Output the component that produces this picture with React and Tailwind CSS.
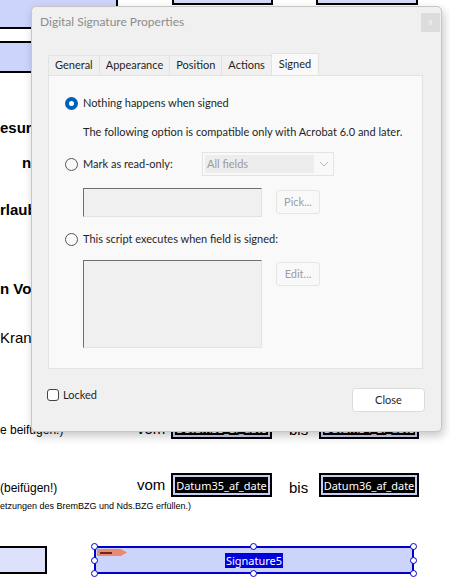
import React from 'react';

const ui = { fontFamily: 'Lato, "Noto Sans", sans-serif' };
const arial = { fontFamily: '"Liberation Sans", Arial, sans-serif' };

function Radio({ checked }) {
  if (checked) {
    return (
      <span className="w-[13px] h-[13px] rounded-full bg-[#005fb8] flex items-center justify-center shrink-0">
        <span className="w-[5px] h-[5px] rounded-full bg-white" />
      </span>
    );
  }
  return <span className="w-[13px] h-[13px] rounded-full border border-[#555] bg-transparent shrink-0" />;
}

function DateField({ label, h }) {
  return (
    <div className={`w-full ${h} border-2 border-black bg-[#c9cdf2] p-[2px]`}>
      <div className="w-full h-full bg-black text-white text-[11px] leading-none flex items-center justify-center" style={{ fontFamily: '"Noto Sans", sans-serif' }}>
        {label}
      </div>
    </div>
  );
}

function Handle({ className }) {
  return <span className={`absolute w-[7px] h-[7px] rounded-full bg-white border-[1.5px] border-[#0000cc] ${className}`} />;
}

function DateRow({ note, from, to, h, mt }) {
  return (
    <div className={`grid grid-cols-[137px_34px_101px_47px_100px] items-center ${mt} text-[15px] text-black`}>
      <span className="self-end text-[12px] leading-[18px]">{note}</span>
      <span className="leading-[18px]">vom</span>
      <DateField label={from} h={h} />
      <span className="self-end pl-[17px] leading-[18px]">bis</span>
      <DateField label={to} h={h} />
    </div>
  );
}

export default function App() {
  const tabs = ['General', 'Appearance', 'Position', 'Actions'];
  return (
    <div className="relative w-[450px] h-[583px] overflow-hidden bg-white" style={arial}>
      {/* PDF page underneath */}
      <div className="flex flex-col">
        <div className="flex items-start">
          <div className="w-[118px] h-[29px] bg-[#ccd4fc] border-r-2 border-b-2 border-black" />
          <div className="ml-[54px] w-[101px] h-[5px] bg-[#d4d8f4] border-x-2 border-b-2 border-black" />
          <div className="ml-[43px] w-[102px] h-[5px] bg-[#d4d8f4] border-x-2 border-b-2 border-black" />
        </div>
        <div className="mt-[12px] w-[120px] h-[32px] bg-[#ccd4fc] border-y-2 border-r-2 border-black" />

        <div className="flex flex-col items-start text-[15px] leading-[18px] font-bold text-black">
          <span className="mt-[46px]">esuren</span>
          <span className="mt-[17px] ml-[22px]">nach</span>
          <span className="mt-[29px]">rlaub</span>
          <span className="mt-[61px]">n Vorber</span>
          <span className="mt-[31px] font-normal">Krankh</span>
        </div>

        <DateRow note="e beifügen!)" from="Datum33_af_date" to="Datum34_af_date" h="h-[21px]" mt="mt-[71px]" />
        <DateRow note="(beifügen!)" from="Datum35_af_date" to="Datum36_af_date" h="h-[24px]" mt="mt-[34px]" />
        <span className="mt-[4px] text-[9px] leading-[11px] text-black">etzungen des BremBZG und Nds.BZG erfüllen.)</span>

        <div className="flex items-start mt-[34px]">
          <div className="w-[47px] h-[28px] bg-[#dde1fc] border-y-2 border-r-2 border-black" />
          <div className="relative ml-[47px] w-[320px] h-[28px] bg-[#cdd4fc] border-2 border-[#0000cc] flex items-center justify-center">
            <span className="absolute left-[1px] top-[1px] w-[30px] h-[7px] bg-[#e98a74] [clip-path:polygon(0_0,80%_0,100%_50%,80%_100%,0_100%)] flex items-center pl-[3px]">
              <span className="w-[12px] h-[2px] bg-[#6b2a1c]" />
            </span>
            <span className="bg-[#0000dd] text-white text-[11px] leading-[15px] px-[1px]" style={{ fontFamily: '"Noto Sans", sans-serif' }}>Signature5</span>
            <Handle className="left-[-5px] top-[-5px]" />
            <Handle className="left-[154px] top-[-5px]" />
            <Handle className="right-[-5px] top-[-5px]" />
            <Handle className="left-[-5px] top-[9px]" />
            <Handle className="right-[-5px] top-[9px]" />
            <Handle className="left-[-5px] bottom-[-5px]" />
            <Handle className="left-[154px] bottom-[-5px]" />
            <Handle className="right-[-5px] bottom-[-5px]" />
          </div>
        </div>
      </div>

      {/* Dialog */}
      <div
        className="absolute left-[31px] top-[6px] w-[411px] h-[426px] bg-[#f0f0f0] border border-[#c6c6c6] rounded-[5px] shadow-[2px_4px_10px_rgba(0,0,0,0.22)] flex flex-col text-[#1f1f1f]"
        style={ui}
      >
        <div className="flex items-start h-[46px]">
          <span className="pl-[8px] pt-[6px] text-[12px] text-[#8c8c8c]">Digital Signature Properties</span>
          <span className="ml-auto mt-[6px] mr-[1px] w-[19px] h-[19px] bg-[#dcdcdc] text-[#f4f4f4] text-[9px] leading-[17px] text-center">x</span>
        </div>

        <div className="flex items-end pl-[16px] h-[22px] text-[11px]">
          {tabs.map((t) => (
            <span key={t} className="h-[20px] px-[6px] flex items-center border-l border-t border-[#e2e2e2] text-[#1f1f1f]">
              {t}
            </span>
          ))}
          <span className="h-[22px] px-[7px] flex items-center bg-[#f9f9f9] border border-b-0 border-[#e2e2e2] text-[#1f1f1f]">
            Signed
          </span>
        </div>

        <div className="ml-[16px] w-[375px] h-[294px] bg-[#f9f9f9] border border-[#e2e2e2] flex flex-col pl-[16px] pt-[18px] text-[11px]">
          <div className="flex items-center gap-[5px] h-[18px]">
            <Radio checked />
            <span>Nothing happens when signed</span>
          </div>
          <div className="flex items-center h-[18px] mt-[11px] pl-[18px]">
            The following option is compatible only with Acrobat 6.0 and later.
          </div>
          <div className="flex items-center h-[24px] mt-[11px]">
            <Radio />
            <span className="ml-[5px] w-[119px]">Mark as read-only:</span>
            <div className="w-[132px] h-[24px] border border-[#e3e3e3] bg-[#f9f9f9] flex items-center p-[2px]">
              <div className="w-[109px] h-full bg-[#ededed] flex items-center pl-[2px] text-[#9a9a9a]">All fields</div>
              <svg width="10" height="6" viewBox="0 0 10 6" className="ml-[5px]">
                <path d="M1 1l4 4 4-4" fill="none" stroke="#b5b5b5" strokeWidth="1" />
              </svg>
            </div>
          </div>
          <div className="flex items-start mt-[12px] pl-[18px]">
            <div className="w-[179px] h-[29px] bg-[#f0f0f0] border-[1.5px] border-t-[#6e6e6e] border-l-[#6e6e6e] border-r-[#e2e2e2] border-b-[#e2e2e2]" />
            <span className="ml-[14px] mt-[2px] w-[44px] h-[24px] rounded-[3px] border border-[#e6e6e6] bg-[#f9f9f9] text-[#9d9d9d] flex items-center justify-center">Pick...</span>
          </div>
          <div className="flex items-center gap-[5px] h-[18px] mt-[13px]">
            <Radio />
            <span>This script executes when field is signed:</span>
          </div>
          <div className="flex items-start mt-[12px] pl-[18px]">
            <div className="w-[179px] h-[88px] bg-[#f0f0f0] border-[1.5px] border-t-[#6e6e6e] border-l-[#6e6e6e] border-r-[#e2e2e2] border-b-[#e2e2e2]" />
            <span className="ml-[14px] mt-[2px] w-[44px] h-[24px] rounded-[3px] border border-[#e6e6e6] bg-[#f9f9f9] text-[#9d9d9d] flex items-center justify-center">Edit...</span>
          </div>
        </div>

        <div className="flex items-start pl-[15px] pr-[16px] mt-[19px] text-[11px]">
          <span className="mt-[1px] w-[12px] h-[12px] rounded-[3px] border border-[#444] bg-white" />
          <span className="ml-[4px] leading-[14px]">Locked</span>
          <span className="ml-auto w-[73px] h-[24px] rounded-[4px] border border-[#dcdcdc] bg-white flex items-center justify-center text-[#1f1f1f]">
            Close
          </span>
        </div>
      </div>
    </div>
  );
}
